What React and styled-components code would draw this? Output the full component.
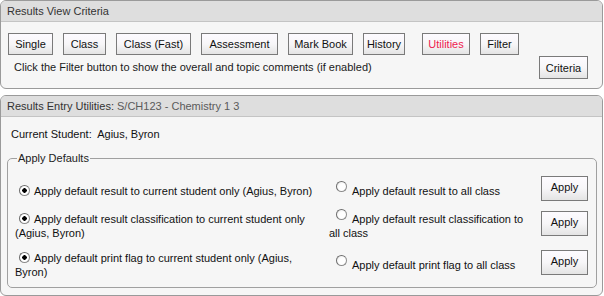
import React from "react";
import styled, { createGlobalStyle } from "styled-components";

const GlobalStyle = createGlobalStyle`
  body {
    margin: 0;
    background: #ffffff;
    font-family: "Liberation Sans", Arial, sans-serif;
    font-size: 11px;
    color: #111;
  }
`;

const Page = styled.div`
  width: 603px;
  display: flex;
  flex-direction: column;
  gap: 6px;
`;

const Panel = styled.section`
  box-sizing: border-box;
  height: ${(p) => p.$height}px;
  border: 1px solid #9a9a9a;
  border-radius: 6px;
  background: #f6f6f6;
  overflow: hidden;
  display: flex;
  flex-direction: column;
`;

const PanelHeader = styled.div`
  height: 20px;
  line-height: 20px;
  padding-left: 6px;
  background: #dedede;
  border-bottom: 1px solid #c4c4c4;
  color: #333;
  font-size: 11px;
`;

const Muted = styled.span`
  color: #5a5a5a;
`;

const CriteriaBody = styled.div`
  padding: 11px 14px 0 7px;
  display: flex;
  flex-direction: column;
  gap: 1px;
`;

const ButtonRow = styled.div`
  display: flex;
  gap: 10px;
`;

const Button = styled.button`
  box-sizing: border-box;
  width: ${(p) => p.$w}px;
  height: ${(p) => p.$h || 22}px;
  margin-left: ${(p) => p.$offset || 0}px;
  padding: 0 0 ${(p) => p.$lift || 0}px;
  border: 1px solid #7a7a7a;
  border-radius: 0;
  background: linear-gradient(#fdfbff 0%, #f7f6f8 50%, #e4e4e4 100%);
  font-family: "Liberation Sans", Arial, sans-serif;
  font-size: 11px;
  color: ${(p) => (p.$active ? "#ee1b4f" : "#111")};
  cursor: pointer;
  flex: none;
`;

const NoteRow = styled.div`
  display: flex;
  align-items: center;
  justify-content: space-between;
`;

const Note = styled.span`
  padding-left: 6px;
  margin-top: -2px;
  color: #1a1a1a;
`;

const EntryBody = styled.div`
  padding: 10px 5px 0 6px;
  display: flex;
  flex-direction: column;
`;

const Student = styled.div`
  padding-left: 4px;
  line-height: 14px;
  color: #111;
`;

const Fieldset = styled.fieldset`
  margin: 10px 0 0;
  padding: 11px 8px 8px 7px;
  border: 1px solid #a0a0a0;
  border-radius: 5px;
`;

const Legend = styled.legend`
  margin-left: 2px;
  padding: 0 1px;
  color: #222;
  line-height: 14px;
`;

const Grid = styled.div`
  display: grid;
  grid-template-columns: 306px 1fr 47px;
  column-gap: 8px;
  row-gap: 6px;
  align-items: center;
`;

const Choice = styled.label`
  line-height: 14px;
  color: #111;
`;

const Radio = styled.span`
  display: inline-block;
  box-sizing: border-box;
  width: 11px;
  height: 11px;
  margin: ${(p) => (p.$raised ? 2 : 6)}px ${(p) => p.$mr}px 0 ${(p) => p.$ml}px;
  vertical-align: ${(p) => (p.$raised ? "3px" : "-1px")};
  border-radius: 50%;
  border: 1px solid #8c8c8c;
  border-top-color: #6e6e6e;
  border-left-color: #6e6e6e;
  background: ${(p) =>
    p.$checked
      ? "radial-gradient(circle, #000 0 2px, #fff 2.5px)"
      : "radial-gradient(circle at 65% 65%, #ffffff 0 45%, #e6e6e6 100%)"};
`;

const rows = [
  {
    own: "Apply default result to current student only (Agius, Byron)",
    all: "Apply default result to all class",
  },
  {
    own: "Apply default result classification to current student only (Agius, Byron)",
    all: "Apply default result classification to all class",
  },
  {
    own: "Apply default print flag to current student only (Agius, Byron)",
    all: "Apply default print flag to all class",
  },
];

const viewButtons = [
  { label: "Single", w: 45 },
  { label: "Class", w: 43 },
  { label: "Class (Fast)", w: 75 },
  { label: "Assessment", w: 77 },
  { label: "Mark Book", w: 65 },
  { label: "History", w: 42 },
  { label: "Utilities", w: 48, active: true, offset: 7 },
  { label: "Filter", w: 39 },
];

export default function App() {
  return (
    <>
      <GlobalStyle />
      <Page>
        <Panel $height={89}>
          <PanelHeader>Results View Criteria</PanelHeader>
          <CriteriaBody>
            <ButtonRow>
              {viewButtons.map((b) => (
                <Button key={b.label} $w={b.w} $active={b.active} $offset={b.offset}>
                  {b.label}
                </Button>
              ))}
            </ButtonRow>
            <NoteRow>
              <Note>
                Click the Filter button to show the overall and topic comments (if enabled)
              </Note>
              <Button $w={49} $h={23}>Criteria</Button>
            </NoteRow>
          </CriteriaBody>
        </Panel>

        <Panel $height={201}>
          <PanelHeader>
            Results Entry Utilities: <Muted>S/CH123 - Chemistry 1 3</Muted>
          </PanelHeader>
          <EntryBody>
            <Student>Current Student:&nbsp; Agius, Byron</Student>
            <Fieldset>
              <Legend>Apply Defaults</Legend>
              <Grid>
                {rows.map((r) => (
                  <React.Fragment key={r.own}>
                    <Choice>
                      <Radio $checked $ml={4} $mr={4} />
                      {r.own}
                    </Choice>
                    <Choice>
                      <Radio $raised $ml={7} $mr={5} />
                      {r.all}
                    </Choice>
                    <Button $w={47} $h={25} $lift={3}>Apply</Button>
                  </React.Fragment>
                ))}
              </Grid>
            </Fieldset>
          </EntryBody>
        </Panel>
      </Page>
    </>
  );
}
